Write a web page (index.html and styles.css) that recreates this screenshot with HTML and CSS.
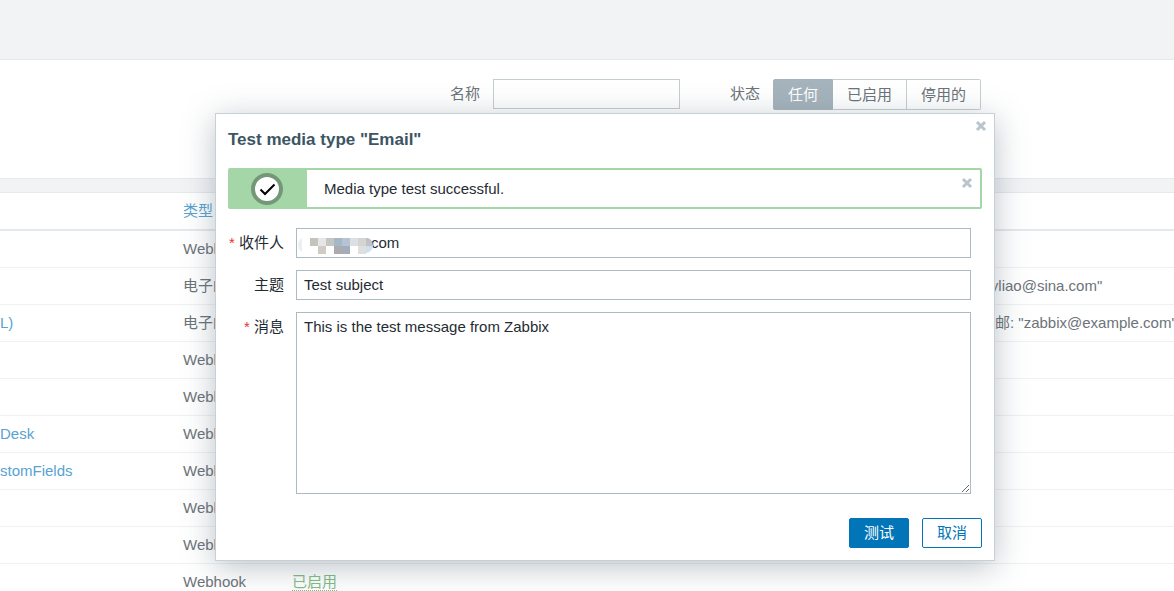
FILE: index.html
```html
<!DOCTYPE html>
<html lang="zh-CN">
<head>
<meta charset="utf-8">
<title>Media types</title>
<link rel="stylesheet" href="styles.css">
</head>
<body>
<div class="page">
  <header class="topbar"></header>
  <form class="filter">
    <label for="filter-name">名称</label>
    <input class="filter-name" id="filter-name" type="text">
    <span class="filter-status" id="status-label">状态</span>
    <div class="segments" role="group" aria-labelledby="status-label">
      <button type="button" class="segment selected">任何</button>
      <button type="button" class="segment">已启用</button>
      <button type="button" class="segment">停用的</button>
    </div>
  </form>
  <table class="list">
    <thead>
      <tr><th class="col-name"></th><th class="col-type"><a href="#">类型</a></th><th class="col-status"></th><th class="col-details"></th></tr>
    </thead>
    <tbody>
      <tr><td></td><td>Webhook</td><td></td><td></td></tr>
      <tr><td></td><td>电子邮件</td><td></td><td>wyliao@sina.com"</td></tr>
      <tr><td><a href="#">L)</a></td><td>电子邮件</td><td></td><td>电邮: "zabbix@example.com"</td></tr>
      <tr><td></td><td>Webhook</td><td></td><td></td></tr>
      <tr><td></td><td>Webhook</td><td></td><td></td></tr>
      <tr><td><a href="#">Desk</a></td><td>Webhook</td><td></td><td></td></tr>
      <tr><td><a href="#">stomFields</a></td><td>Webhook</td><td></td><td></td></tr>
      <tr><td></td><td>Webhook</td><td></td><td></td></tr>
      <tr><td></td><td>Webhook</td><td></td><td></td></tr>
      <tr><td></td><td>Webhook</td><td><a class="enabled" href="#">已启用</a></td><td></td></tr>
    </tbody>
  </table>

  <section class="dialog" role="dialog" aria-labelledby="dialog-title">
    <button type="button" class="close dialog-close" aria-label="Close">
      <svg width="12" height="12" viewBox="0 0 12 12"><path d="M2 2l8 8M10 2l-8 8"/></svg>
    </button>
    <h1 id="dialog-title">Test media type "Email"</h1>
    <div class="message">
      <div class="message-icon">
        <svg width="32" height="32" viewBox="0 0 32 32"><circle cx="16" cy="16" r="14" fill="#fff" stroke="#749877" stroke-width="4"/><path d="M9.500 16.500l4.500 4.500 9.500-9.500" fill="none" stroke="#000" stroke-width="2"/></svg>
      </div>
      <p>Media type test successful.</p>
      <button type="button" class="close message-close" aria-label="Close">
        <svg width="12" height="12" viewBox="0 0 12 12"><path d="M2 2l8 8M10 2l-8 8"/></svg>
      </button>
    </div>
    <form class="fields">
      <label class="required" for="sendto">收件人</label>
      <div class="recipient">
        <input id="sendto" type="text" value="com">
        <svg class="mask" width="78" height="18" viewBox="0 0 78 18">
          <path d="M5 1Q1 3 1 8t4 7z" fill="#edf0f1"/>
          <path d="M13 1h8v8h-8z" fill="#c4c4be"/>
          <path d="M21 1h8v8h-8z" fill="#e6e6e8"/>
          <path d="M29 1h8v8h-8z" fill="#c6c6c0"/>
          <path d="M37 1h8v8h-8z" fill="#a5b8c8"/>
          <path d="M45 1h8v8h-8z" fill="#b5c3d3"/>
          <path d="M53 1h8v8h-8z" fill="#dddfe4"/>
          <path d="M61 1h8v8h-8z" fill="#d5d4d4"/>
          <path d="M69 1h2q5 2 5 8h-7z" fill="#c3c1c4"/>
          <path d="M21 9h8v8h-8z" fill="#d1cbc5"/>
          <path d="M37 9h8v8h-8z" fill="#acacb0"/>
          <path d="M45 9h8v8h-8z" fill="#a3adba"/>
          <path d="M61 9h8v8h-8z" fill="#dfdfe0"/>
          <path d="M69 9h7q-1 6-7 7z" fill="#cde0ee"/>
        </svg>
      </div>
      <label for="subject">主题</label>
      <input id="subject" type="text" value="Test subject">
      <label class="required" for="message">消息</label>
      <textarea id="message">This is the test message from Zabbix</textarea>
    </form>
    <div class="actions">
      <button type="button" class="primary">测试</button>
      <button type="button" class="secondary">取消</button>
    </div>
  </section>
</div>
</body>
</html>
```
FILE: styles.css
```css
* { box-sizing: border-box; }
body {
  margin: 0;
  background: #fff;
  color: #6c7379;
  overflow: hidden;
}
body, input, textarea, button {
  font-family: "Liberation Sans", "Noto Sans CJK SC", sans-serif;
  font-size: 15px;
  line-height: 20px;
}
a { color: #57a3d1; text-decoration: none; }
.page { position: relative; height: 100vh; overflow: hidden; }
.topbar { height: 60px; background: #f2f3f5; border-bottom: 1px solid #e4e9ed; }
.filter {
  display: flex;
  align-items: flex-start;
  height: 119px;
  padding: 19px 193px 0 450px;
  border-bottom: 1px solid #e4e9ed;
  white-space: nowrap;
}
.filter label, .filter-status { line-height: 30px; }
.filter-name {
  flex: 1;
  min-width: 0;
  height: 30px;
  margin: 0 50px 0 13px;
  border: 1px solid #c4ced2;
  background: transparent;
}
.segments { display: flex; margin-left: 13px; }
.segment {
  height: 31px;
  padding: 0 14px;
  border: 1px solid #c4ced2;
  border-left-width: 0;
  background: transparent;
  color: #6c7379;
}
.segment:first-child { border-left-width: 1px; border-radius: 2px 0 0 2px; }
.segment:last-child { border-radius: 0 2px 2px 0; }
.segment.selected { background: #a5b3bc; border-color: #a5b3bc; color: #fff; }
.list {
  width: 100%;
  table-layout: fixed;
  border-collapse: separate;
  border-spacing: 0;
  border-top: 13px solid #f2f3f5;
  white-space: nowrap;
}
.list th, .list td { height: 37px; padding: 0; border-bottom: 1px solid #eff2f3; text-align: left; font-weight: normal; }
.list th { height: 39px; border-top: 1px solid #e4e9ed; border-bottom: 2px solid #e4e9ed; }
.col-name { width: 183px; }
.col-type { width: 109px; }
.col-details { width: 194px; }
.enabled { color: #83bd86; border-bottom: 1px dotted #83bd86; }
.dialog {
  position: absolute;
  top: 113px;
  left: 215px;
  right: 179px;
  padding: 12px;
  border: 1px solid #c6d0d7;
  background: #fff;
  color: #1f2c33;
  box-shadow: 0 6px 30px rgba(62, 84, 98, 0.35);
}
.dialog h1 { margin: 0 0 14px; font-size: 17px; line-height: 28px; color: #3c5563; }
.close { position: absolute; width: 16px; height: 16px; padding: 2px; border: 0; background: none; }
.close svg { display: block; fill: none; stroke: #b9c5cc; stroke-width: 3; }
.dialog-close { top: 4px; right: 5px; }
.message {
  position: relative;
  display: flex;
  align-items: stretch;
  height: 41px;
  margin-bottom: 19px;
  border: 2px solid #a5d6a7;
  border-radius: 2px;
}
.message-icon { width: 77px; padding-left: 21px; padding-top: 3px; background: #a5d6a7; }
.message-icon svg { display: block; }
.message p { margin: 0; padding: 9px 17px; }
.message-close { top: 5px; right: 5px; }
.fields { display: grid; grid-template-columns: 56px 1fr; gap: 12px; padding-right: 11px; }
.fields label { text-align: right; line-height: 30px; white-space: nowrap; }
.required::before { content: "* "; color: #e33734; }
.fields input, .fields textarea {
  display: block;
  width: 100%;
  height: 30px;
  padding: 0 7px 2px;
  border: 1px solid #acbbc2;
  background: #fff;
  color: #1f2c33;
}
.fields textarea { height: 182px; padding: 4px 7px; }
.recipient { position: relative; }
.fields .recipient input { padding-left: 74px; }
.mask { position: absolute; top: 9px; left: 1px; }
.actions { display: flex; justify-content: flex-end; gap: 13px; margin-top: 24px; }
.actions button { width: 60px; height: 30px; padding: 0; border: 1px solid #0275b8; border-radius: 2px; }
.primary { background: #0275b8; color: #fff; }
.secondary { background: #fff; color: #0275b8; }
```
